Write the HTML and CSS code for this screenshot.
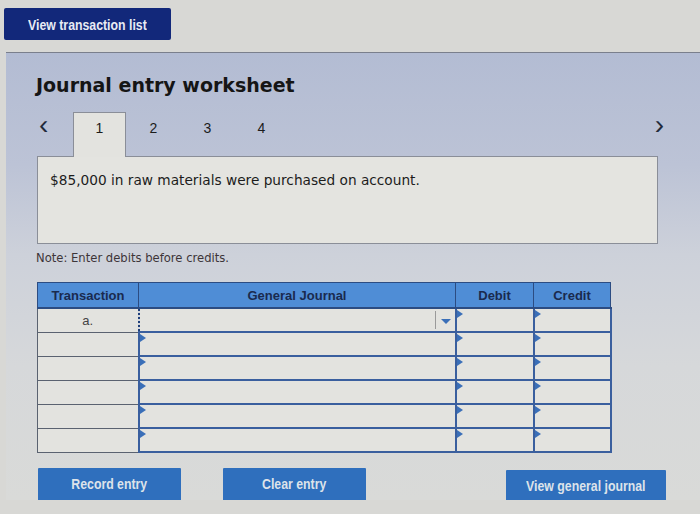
FILE: index.html
```html
<!DOCTYPE html>
<html lang="en">
<head>
  <meta charset="UTF-8" />
  <title>Journal entry worksheet</title>
  <link rel="stylesheet" href="styles.css">
</head>
<body>

<div class="topbar">
  <button class="btn-dark"><span class="cond">View transaction list</span></button>
</div>

<div class="worksheet">
  <h1>Journal entry worksheet</h1>

  <div class="tabs">
    <span class="arrow">&lsaquo;</span>
    <span class="tab active">1</span>
    <span class="tab">2</span>
    <span class="tab">3</span>
    <span class="tab">4</span>
    <span class="spacer"></span>
    <span class="arrow">&rsaquo;</span>
  </div>

  <div class="question">$85,000 in raw materials were purchased on account.</div>

  <p class="note">Note: Enter debits before credits.</p>

  <table class="journal">
    <colgroup>
      <col class="c-trans">
      <col class="c-gj">
      <col class="c-num">
      <col class="c-last">
    </colgroup>
    <thead>
      <tr>
        <th>Transaction</th>
        <th>General Journal</th>
        <th>Debit</th>
        <th>Credit</th>
      </tr>
    </thead>
    <tbody>
      <tr>
        <td class="trans">a.</td>
        <td class="entry focus"><span class="dd"></span></td>
        <td class="entry"><i class="tri"></i></td>
        <td class="entry"><i class="tri"></i></td>
      </tr>
      <tr><td class="trans"></td><td class="entry"><i class="tri"></i></td><td class="entry"><i class="tri"></i></td><td class="entry"><i class="tri"></i></td></tr>
      <tr><td class="trans"></td><td class="entry"><i class="tri"></i></td><td class="entry"><i class="tri"></i></td><td class="entry"><i class="tri"></i></td></tr>
      <tr><td class="trans"></td><td class="entry"><i class="tri"></i></td><td class="entry"><i class="tri"></i></td><td class="entry"><i class="tri"></i></td></tr>
      <tr><td class="trans"></td><td class="entry"><i class="tri"></i></td><td class="entry"><i class="tri"></i></td><td class="entry"><i class="tri"></i></td></tr>
      <tr><td class="trans"></td><td class="entry"><i class="tri"></i></td><td class="entry"><i class="tri"></i></td><td class="entry"><i class="tri"></i></td></tr>
    </tbody>
  </table>

  <div class="actions">
    <button class="btn-blue"><span class="cond">Record entry</span></button>
    <button class="btn-blue"><span class="cond">Clear entry</span></button>
    <span class="spacer"></span>
    <button class="btn-blue wide"><span class="cond">View general journal</span></button>
  </div>
</div>

</body>
</html>
```

FILE: styles.css
```css
body {
  margin: 0;
  background: #d8d8d5;
  font-family: "DejaVu Sans", Verdana, sans-serif;
  color: #1c1c1c;
}
.topbar {
  padding: 8px 4px 12px;
}
.cond {
  display: inline-block;
  transform: scaleX(0.82);
  white-space: nowrap;
}
.btn-dark {
  width: 167px;
  height: 32px;
  border: none;
  border-radius: 2px;
  background: #12287a;
  color: #e8ebf4;
  font-family: "Liberation Sans", Arial, sans-serif;
  font-weight: bold;
  font-size: 15px;
  padding: 0;
}
.worksheet {
  margin-left: 6px;
  border-top: 1px solid #7a7f8c;
  background: linear-gradient(180deg, #b3bcd3 0%, #bcc3d6 25%, #cdd1da 45%, #d6d8da 70%, #d9dad8 100%);
  padding: 21px 0 12px 30px;
  height: 448px;
  box-sizing: border-box;
}
h1 {
  margin: 0 0 16px;
  font-size: 19px;
  font-weight: bold;
  color: #151515;
}
.tabs {
  display: flex;
  align-items: flex-start;
  height: 44px;
  margin-right: 36px;
  font-family: "Liberation Sans", Arial, sans-serif;
  font-size: 14px;
}
.arrow {
  font-size: 28px;
  width: 37px;
  box-sizing: border-box;
  padding-left: 3px;
  color: #222a3a;
  line-height: 1;
  margin-top: -1px;
}
.tabs .arrow:last-child {
  width: auto;
}
.tab {
  width: 53px;
  height: 44px;
  text-align: center;
  box-sizing: border-box;
  padding-top: 8px;
  margin-right: 1px;
}
.tab.active {
  background: #e3e3df;
  border: 1px solid #8a8e98;
  border-bottom: none;
  padding-top: 7px;
  position: relative;
  height: 45px;
}
.spacer {
  flex: 1;
}
.question {
  margin-left: 1px;
  width: 621px;
  height: 88px;
  box-sizing: border-box;
  background: #e4e4e0;
  border: 1px solid #8a8e98;
  padding: 15px 12px;
  font-size: 13.7px;
}
.note {
  margin: 7px 0 17px;
  font-size: 11.6px;
  color: #3d3539;
}
.journal {
  margin-left: 1px;
  border-collapse: collapse;
  table-layout: fixed;
  width: 573px;
  font-family: "Liberation Sans", Arial, sans-serif;
  font-size: 13px;
}
.c-trans { width: 101px; }
.c-gj { width: 317px; }
.c-num { width: 78px; }
.c-last { width: 77px; }
.journal th {
  background: #4f8dd6;
  color: #1a2a4e;
  height: 24px;
  padding: 0;
  border: 1px solid #2c4c82;
  border-bottom: 2px solid #2c4c82;
}
.journal td {
  background: #e3e3df;
  height: 22px;
  padding: 0;
  position: relative;
}
.journal td.trans {
  border: 1px solid #5a6270;
  text-align: center;
  color: #444;
  font-size: 13px;
}
.journal td.entry {
  border: 2px solid #3a5f9e;
}
.journal td.focus {
  border: 2px dotted #1f3f7a;
}
.tri {
  position: absolute;
  left: 0;
  top: 1px;
  width: 0;
  height: 0;
  border-top: 4px solid transparent;
  border-bottom: 4px solid transparent;
  border-left: 6px solid #3a6fb8;
}
.dd {
  position: absolute;
  right: 1px;
  top: 2px;
  bottom: 2px;
  width: 18px;
  border-left: 1px solid #9a9a9a;
}
.dd::after {
  content: "";
  position: absolute;
  left: 5px;
  top: 8px;
  border-left: 5px solid transparent;
  border-right: 5px solid transparent;
  border-top: 5px solid #3a6fb8;
}
.actions {
  display: flex;
  margin: 15px 34px 0 2px;
  align-items: flex-start;
}
.btn-blue {
  width: 143px;
  height: 34px;
  border: none;
  border-radius: 1px;
  background: #2f6fbd;
  color: #dde3ea;
  font-family: "Liberation Sans", Arial, sans-serif;
  font-weight: bold;
  font-size: 15px;
  margin-right: 42px;
  padding: 0 0 3px;
}
.btn-blue.wide {
  width: 160px;
  margin: 2px 0 0;
}
```
